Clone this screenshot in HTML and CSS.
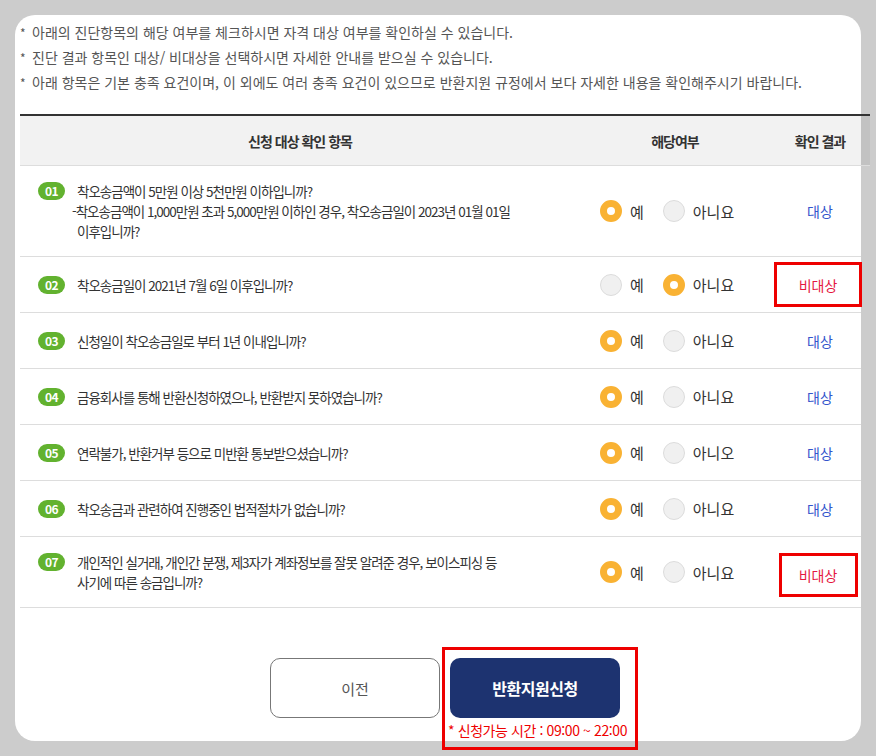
FILE: index.html
```html
<!DOCTYPE html>
<html lang="ko">
<head>
<meta charset="utf-8">
<title>신청 대상 확인</title>
<link rel="stylesheet" href="styles.css">
</head>
<body>
<div class="modal">
  <ul class="notes">
    <li>아래의 진단항목의 해당 여부를 체크하시면 자격 대상 여부를 확인하실 수 있습니다.</li>
    <li>진단 결과 항목인 대상/ 비대상을 선택하시면 자세한 안내를 받으실 수 있습니다.</li>
    <li>아래 항목은 기본 충족 요건이며, 이 외에도 여러 충족 요건이 있으므로 반환지원 규정에서 보다 자세한 내용을 확인해주시기 바랍니다.</li>
  </ul>
  <div class="wrap">
    <div class="thead">
      <div>신청 대상 확인 항목</div>
      <div>해당여부</div>
      <div>확인 결과</div>
    </div>

    <div class="row">
      <div class="q"><span class="num">01</span><p class="qt">착오송금액이 5만원 이상 5천만원 이하입니까?<span class="sub">-착오송금액이 1,000만원 초과 5,000만원 이하인 경우, 착오송금일이 2023년 01월 01일<br>이후입니까?</span></p></div>
      <div class="opts"><span class="radio"><i class="dot on"></i>예</span><span class="radio"><i class="dot"></i>아니요</span></div>
      <div class="res"><span class="ok">대상</span></div>
    </div>

    <div class="row">
      <div class="q"><span class="num">02</span><p class="qt">착오송금일이 2021년 7월 6일 이후입니까?</p></div>
      <div class="opts"><span class="radio"><i class="dot"></i>예</span><span class="radio"><i class="dot on"></i>아니요</span></div>
      <div class="res"><span class="no flag flag-a">비대상</span></div>
    </div>

    <div class="row">
      <div class="q"><span class="num">03</span><p class="qt">신청일이 착오송금일로 부터 1년 이내입니까?</p></div>
      <div class="opts"><span class="radio"><i class="dot on"></i>예</span><span class="radio"><i class="dot"></i>아니요</span></div>
      <div class="res"><span class="ok">대상</span></div>
    </div>

    <div class="row">
      <div class="q"><span class="num">04</span><p class="qt">금융회사를 통해 반환신청하였으나, 반환받지 못하였습니까?</p></div>
      <div class="opts"><span class="radio"><i class="dot on"></i>예</span><span class="radio"><i class="dot"></i>아니요</span></div>
      <div class="res"><span class="ok">대상</span></div>
    </div>

    <div class="row">
      <div class="q"><span class="num">05</span><p class="qt">연락불가, 반환거부 등으로 미반환 통보받으셨습니까?</p></div>
      <div class="opts"><span class="radio"><i class="dot on"></i>예</span><span class="radio"><i class="dot"></i>아니오</span></div>
      <div class="res"><span class="ok">대상</span></div>
    </div>

    <div class="row">
      <div class="q"><span class="num">06</span><p class="qt">착오송금과 관련하여 진행중인 법적절차가 없습니까?</p></div>
      <div class="opts"><span class="radio"><i class="dot on"></i>예</span><span class="radio"><i class="dot"></i>아니요</span></div>
      <div class="res"><span class="ok">대상</span></div>
    </div>

    <div class="row">
      <div class="q"><span class="num">07</span><p class="qt">개인적인 실거래, 개인간 분쟁, 제3자가 계좌정보를 잘못 알려준 경우, 보이스피싱 등<br>사기에 따른 송금입니까?</p></div>
      <div class="opts"><span class="radio"><i class="dot on"></i>예</span><span class="radio"><i class="dot"></i>아니요</span></div>
      <div class="res"><span class="no flag flag-b">비대상</span></div>
    </div>

    <div class="actions">
      <button class="btn btn-prev" type="button">이전</button>
      <div class="apply-box">
        <button class="btn btn-apply" type="button">반환지원신청</button>
        <p class="time">* 신청가능 시간 : 09:00 ~ 22:00</p>
      </div>
    </div>
  </div>
</div>
</body>
</html>
```

FILE: styles.css
```css
* { box-sizing: border-box; }

html, body {
  min-height: 756px;
}

body {
  margin: 0;
  background: #cccccc;
  font-family: "Noto Sans CJK KR", "Noto Sans", sans-serif;
}

.modal {
  margin: 15px 0 0 15px;
  width: 846px;
  height: 726px;
  background: #ffffff;
  border-radius: 20px;
  padding: 5px 0 0 5px;
  overflow: visible;
}

.notes {
  list-style: none;
  margin: 0;
  padding: 0;
  font-size: 14px;
  line-height: 25px;
  color: #555555;
  white-space: nowrap;
}

.notes li::before {
  content: "*";
  display: inline-block;
  width: 12px;
  font-size: 12px;
}

.wrap {
  width: 850px;
  margin-top: 19px;
}

.thead {
  display: grid;
  grid-template-columns: 560px 190px 100px;
  height: 52px;
  border-top: 2px solid #333333;
  border-bottom: 1px solid #dddddd;
  background: linear-gradient(to right, #f2f2f2 841px, #c2c2c2 841px);
  align-items: center;
  text-align: center;
  font-weight: 700;
  font-size: 14px;
  letter-spacing: -1px;
  color: #333333;
}

.row {
  display: grid;
  grid-template-columns: 560px 190px 100px;
  min-height: 56px;
  padding-bottom: 1px;
  background: linear-gradient(#dddddd, #dddddd) left bottom / 841px 1px no-repeat;
}

.q {
  align-self: center;
  display: flex;
  align-items: flex-start;
  gap: 12px;
  padding: 15px 0 15px 18px;
}

.num {
  flex: none;
  width: 27px;
  height: 18px;
  margin-top: 1px;
  border-radius: 9px;
  background: #62b22f;
  color: #ffffff;
  font-size: 12px;
  font-weight: 700;
  line-height: 18px;
  text-align: center;
  letter-spacing: -0.5px;
}

.qt {
  margin: 0;
  font-size: 13.5px;
  line-height: 20px;
  letter-spacing: -1px;
  color: #333333;
  white-space: nowrap;
}

.sub {
  display: block;
  text-indent: -5px;
}

.opts {
  display: flex;
  align-items: center;
  padding-left: 20px;
}

.radio {
  display: flex;
  align-items: center;
  gap: 8px;
  font-size: 15px;
  color: #333333;
}

.radio + .radio {
  margin-left: 19px;
}

.dot {
  width: 22px;
  height: 22px;
  border-radius: 50%;
  background: #f0f0f0;
  border: 1px solid #dcdcdc;
}

.dot.on {
  background: #ffffff;
  border: 7px solid #f9b233;
}

.res {
  display: flex;
  align-items: center;
  justify-content: center;
  font-size: 14px;
}

.ok { color: #3355cc; }
.no { color: #e5173f; }

.flag {
  display: flex;
  align-items: center;
  justify-content: center;
  border: 3px solid #ee0000;
  margin-right: 4px;
}

.flag-a { width: 88px; height: 45px; }
.flag-b { width: 79px; height: 44px; margin-top: 6px; }

.actions {
  display: flex;
  align-items: flex-start;
  padding-left: 250px;
  margin-top: 39px;
}

.btn {
  width: 170px;
  height: 60px;
  border-radius: 10px;
  font-family: "Noto Sans CJK KR", "Noto Sans", sans-serif;
  cursor: pointer;
}

.btn-prev {
  margin-top: 11px;
  border: 1px solid #777777;
  background: #ffffff;
  color: #555555;
  font-size: 15px;
}

.apply-box {
  flex: none;
  margin-left: 2px;
  width: 196px;
  height: 103px;
  border: 3px solid #ee0000;
  padding: 8px 0 0 5px;
}

.btn-apply {
  display: block;
  border: 0;
  background: #1d3370;
  color: #ffffff;
  font-size: 16px;
  font-weight: 700;
  letter-spacing: -0.5px;
}

.time {
  margin: 2px 0 0 -2px;
  font-size: 14px;
  line-height: 20px;
  letter-spacing: -0.4px;
  color: #ee0000;
  white-space: nowrap;
}
```
